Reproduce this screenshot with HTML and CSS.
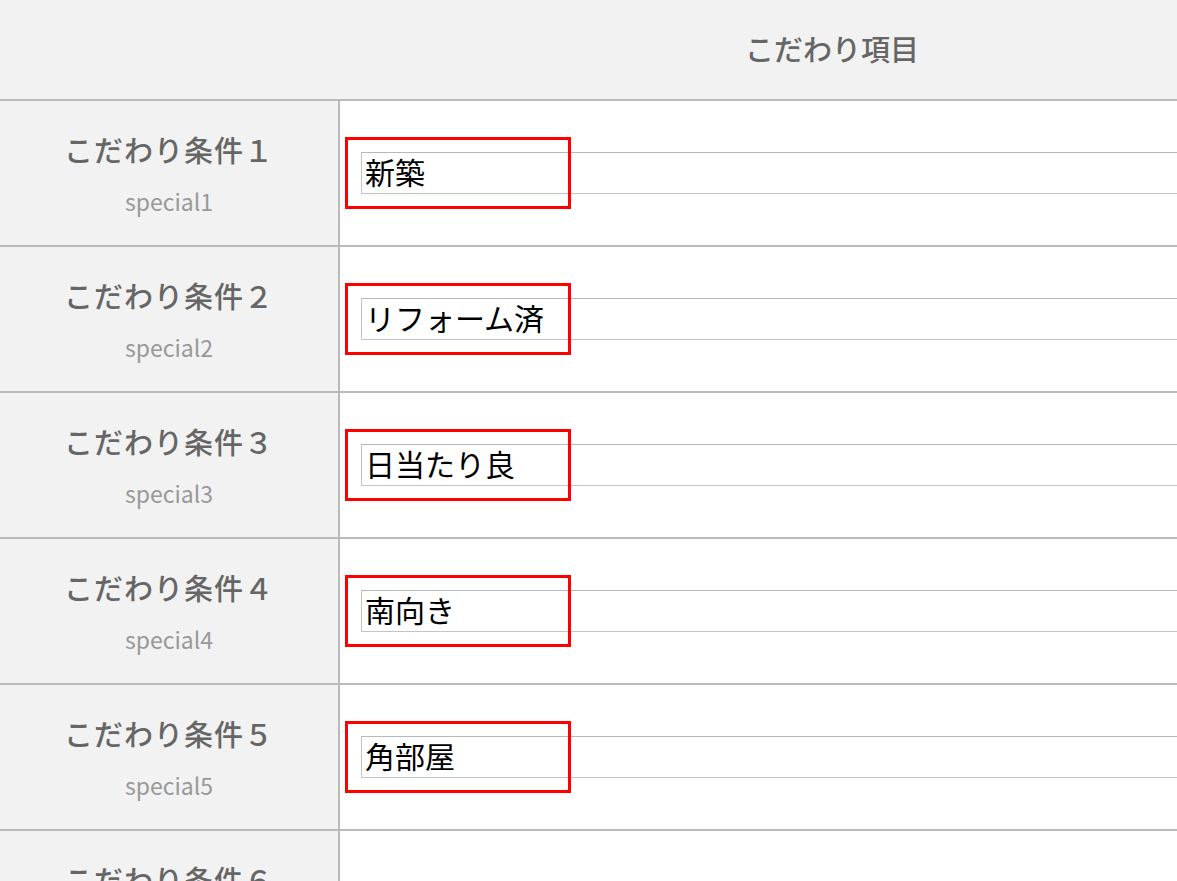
FILE: index.html
```html
<!DOCTYPE html>
<html lang="ja">
<head>
<meta charset="utf-8">
<link rel="stylesheet" href="styles.css">
</head>
<body>
<div class="table">
  <div class="row head">
    <div class="head-left"></div>
    <div class="head-title">こだわり項目</div>
  </div>
  <div class="row">
    <div class="cell-left"><div class="label">こだわり条件１</div><div class="key">special1</div></div>
    <div class="cell-right"><input class="field" type="text" value="新築"><div class="mark"></div></div>
  </div>
  <div class="row">
    <div class="cell-left"><div class="label">こだわり条件２</div><div class="key">special2</div></div>
    <div class="cell-right"><input class="field" type="text" value="リフォーム済"><div class="mark"></div></div>
  </div>
  <div class="row">
    <div class="cell-left"><div class="label">こだわり条件３</div><div class="key">special3</div></div>
    <div class="cell-right"><input class="field" type="text" value="日当たり良"><div class="mark"></div></div>
  </div>
  <div class="row">
    <div class="cell-left"><div class="label">こだわり条件４</div><div class="key">special4</div></div>
    <div class="cell-right"><input class="field" type="text" value="南向き"><div class="mark"></div></div>
  </div>
  <div class="row">
    <div class="cell-left"><div class="label">こだわり条件５</div><div class="key">special5</div></div>
    <div class="cell-right"><input class="field" type="text" value="角部屋"><div class="mark"></div></div>
  </div>
  <div class="row">
    <div class="cell-left"><div class="label">こだわり条件６</div><div class="key">special6</div></div>
    <div class="cell-right"><input class="field" type="text" value=""></div>
  </div>
</div>
</body>
</html>
```
FILE: styles.css
```css
html, body {
  margin: 0;
  padding: 0;
  overflow: hidden;
  background: #fff;
}
body {
  font-family: "Noto Sans CJK JP", "Noto Sans", sans-serif;
}
.table {
  width: 1324px;
  display: flex;
  flex-direction: column;
}
.row {
  display: grid;
  grid-template-columns: 340px 1fr;
  height: 146px;
  box-sizing: border-box;
  border-bottom: 2px solid #bababa;
}
.row.head {
  height: 101px;
  background: #f2f2f2;
}
.head-left {
  background: #f2f2f2;
}
.head-title {
  display: flex;
  align-items: center;
  justify-content: center;
  font-size: 29px;
  font-weight: 500;
  color: #666;
  background: #f2f2f2;
  padding-bottom: 4px;
}
.cell-left {
  background: #f2f2f2;
  border-right: 2px solid #bababa;
  display: flex;
  flex-direction: column;
  align-items: center;
  padding-top: 28px;
}
.label {
  font-size: 29px;
  font-weight: 500;
  color: #666;
  line-height: 40px;
  letter-spacing: 1px;
}
.key {
  margin-top: 18px;
  font-size: 23px;
  color: #999;
  line-height: 28px;
}
.cell-right {
  position: relative;
  background: #fff;
  padding: 51px 0 0 21px;
}
.field {
  display: block;
  box-sizing: border-box;
  width: 1000px;
  height: 42px;
  margin: 0;
  border: 1px solid #c4c4c4;
  border-top-color: #b8b8b8;
  padding: 0 4px 4px 3px;
  font-family: "Noto Sans CJK JP", sans-serif;
  font-size: 30px;
  line-height: 36px;
  color: #000;
  background: #fff;
  outline: none;
}
.mark {
  position: absolute;
  left: 5px;
  top: 36px;
  width: 226px;
  height: 72px;
  box-sizing: border-box;
  border: 3px solid #ff0000;
  pointer-events: none;
}
```
